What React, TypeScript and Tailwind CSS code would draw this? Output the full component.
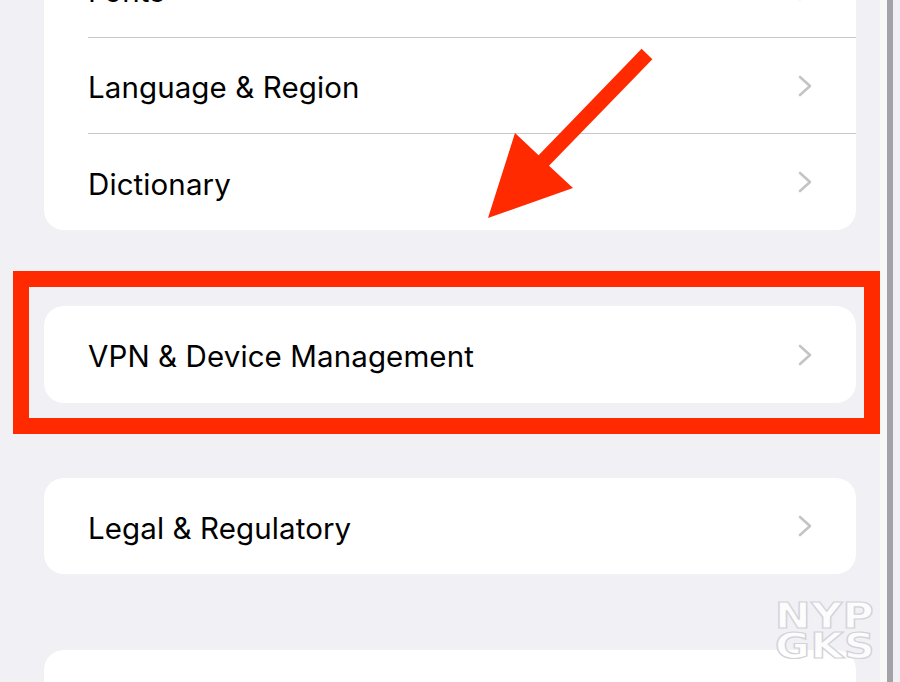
const Chevron = () => (
  <svg width="14" height="22" viewBox="0 0 14 22" fill="none">
    <polyline points="2,2 12,11 2,20" stroke="#c4c4c7" strokeWidth="2.6" strokeLinecap="round" strokeLinejoin="round" />
  </svg>
);

const Row = ({ label, last }: { label: string; last?: boolean }) => (
  <div className="pl-[44px]">
    <div
      className={
        "flex h-[96px] items-center justify-between pr-[44px] " +
        (last ? "" : "border-b border-[#c8c8cc]")
      }
    >
      <span className="pt-[4px] text-[29.5px] tracking-[0.1px] text-black">{label}</span>
      <Chevron />
    </div>
  </div>
);

const App = () => {
  return (
    <div
      className="relative h-[682px] w-[900px] overflow-hidden bg-[#f0f0f5]"
      style={{ fontFamily: "Inter, 'Liberation Sans', sans-serif" }}
    >
      <div className="flex h-full">
        {/* settings list */}
        <div className="w-[880px] pl-[44px]">
          <div className="mt-[-58px] w-[812px] rounded-[20px] bg-white">
            <Row label="Fonts" />
            <Row label="Language & Region" />
            <Row label="Dictionary" last />
          </div>
          <div className="mt-[76px] w-[812px] rounded-[20px] bg-white">
            <div className="flex h-[97px] items-center justify-between pl-[44px] pr-[44px]">
              <span className="pt-[4px] text-[29.5px] tracking-[0.1px] text-black">VPN &amp; Device Management</span>
              <Chevron />
            </div>
          </div>
          <div className="mt-[75px] w-[812px] rounded-[20px] bg-white">
            <Row label="Legal & Regulatory" last />
          </div>
          <div className="mt-[76px] h-[96px] w-[812px] rounded-[20px] bg-white" />
        </div>
        {/* scroll edge */}
        <div className="w-[7px] bg-[#f7f7f8]" />
        <div className="w-[6px] bg-[#a2a2a8]" />
        <div className="flex-1 bg-[#f0f0f5]" />
      </div>

      {/* red highlight box */}
      <div className="absolute left-[13px] top-[271px] h-[163px] w-[867px] border-[16px] border-[#ff2a00]" />

      {/* red arrow */}
      <svg className="absolute left-0 top-0" width="900" height="682" viewBox="0 0 900 682">
        <polygon
          points="641.6,48.8 652.4,59.2 549,165.7 573,188 488,218 515,133 538.6,155.3"
          fill="#ff2a00"
        />
      </svg>

      {/* watermark */}
      <div
        className="absolute left-[775px] top-[601px] flex origin-left scale-x-[1.18] flex-col text-[36px] font-bold leading-[30px] tracking-[0.5px] text-white/80 [-webkit-text-stroke:1.2px_#d2d2d8]"
        style={{ fontFamily: "'DejaVu Sans', sans-serif" }}
      >
        <span className="h-[30px]">NYP</span>
        <span className="h-[30px]">GKS</span>
      </div>
    </div>
  );
};

export default App;
